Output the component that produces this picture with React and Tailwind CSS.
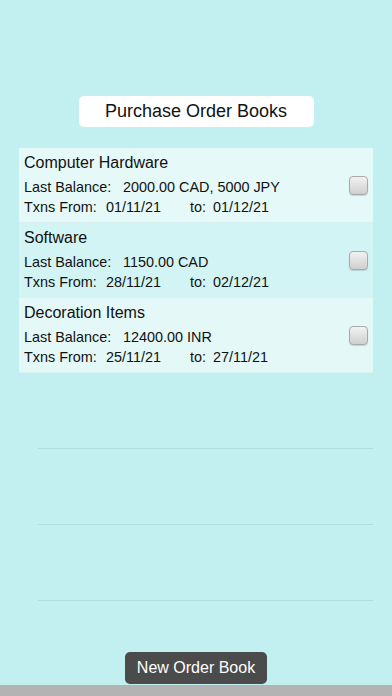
import React from "react";

const books = [
  {
    name: "Computer Hardware",
    balance: "2000.00 CAD, 5000 JPY",
    from: "01/11/21",
    to: "01/12/21",
    bg: "bg-[#e6f9f9]",
  },
  {
    name: "Software",
    balance: "1150.00 CAD",
    from: "28/11/21",
    to: "02/12/21",
    bg: "bg-[#d3f4f5]",
  },
  {
    name: "Decoration Items",
    balance: "12400.00 INR",
    from: "25/11/21",
    to: "27/11/21",
    bg: "bg-[#e4f8f8]",
  },
];

const Checkbox = () => (
  <div className="w-[19px] h-[19px] rounded-[4px] border border-[#a9a9a9] bg-gradient-to-b from-[#f2f2f2] to-[#cfcfcf] shadow-[0_1px_1px_rgba(0,0,0,0.15)]"></div>
);

const BookRow = ({ book }) => (
  <div className={`h-[75px] ${book.bg} flex items-center pl-[5px] pr-[5px] border-b border-[#d8f1f2]`}>
    <div className="flex-1 text-[#111]">
      <div className="text-[16px] leading-[20px] mb-[4px]">{book.name}</div>
      <div className="flex text-[14.4px] leading-[20px]">
        <span className="w-[99px]">Last Balance:</span>
        <span>{book.balance}</span>
      </div>
      <div className="flex text-[14.4px] leading-[20px]">
        <span className="w-[82px]">Txns From:</span>
        <span className="w-[84px]">{book.from}</span>
        <span className="w-[23px]">to:</span>
        <span>{book.to}</span>
      </div>
    </div>
    <Checkbox />
  </div>
);

const App = () => {
  return (
    <div
      className="h-[696px] w-full bg-[#c2eff0] flex flex-col"
      style={{ fontFamily: '"Liberation Sans", Arial, sans-serif' }}
    >
      <div className="pt-[96px] flex justify-center">
        <div className="w-[235px] h-[31px] bg-white rounded-[5px] flex items-center justify-center text-[18px] text-[#111]">
          Purchase Order Books
        </div>
      </div>

      <div className="mt-[21px] mx-[19px]">
        {books.map((b) => (
          <BookRow key={b.name} book={b} />
        ))}
        <div className="h-[76px] ml-[19px] border-b border-[#b1dfe1]"></div>
        <div className="h-[76px] ml-[19px] border-b border-[#b1dfe1]"></div>
        <div className="h-[76px] ml-[19px] border-b border-[#b1dfe1]"></div>
      </div>

      <div className="mt-auto flex justify-center pb-[1px]">
        <div className="w-[142px] h-[32px] bg-[#4b4b4b] rounded-[5px] flex items-center justify-center text-white text-[16px]">
          New Order Book
        </div>
      </div>
      <div className="h-[11px] bg-[#b3b3b3]"></div>
    </div>
  );
};

export default App;
